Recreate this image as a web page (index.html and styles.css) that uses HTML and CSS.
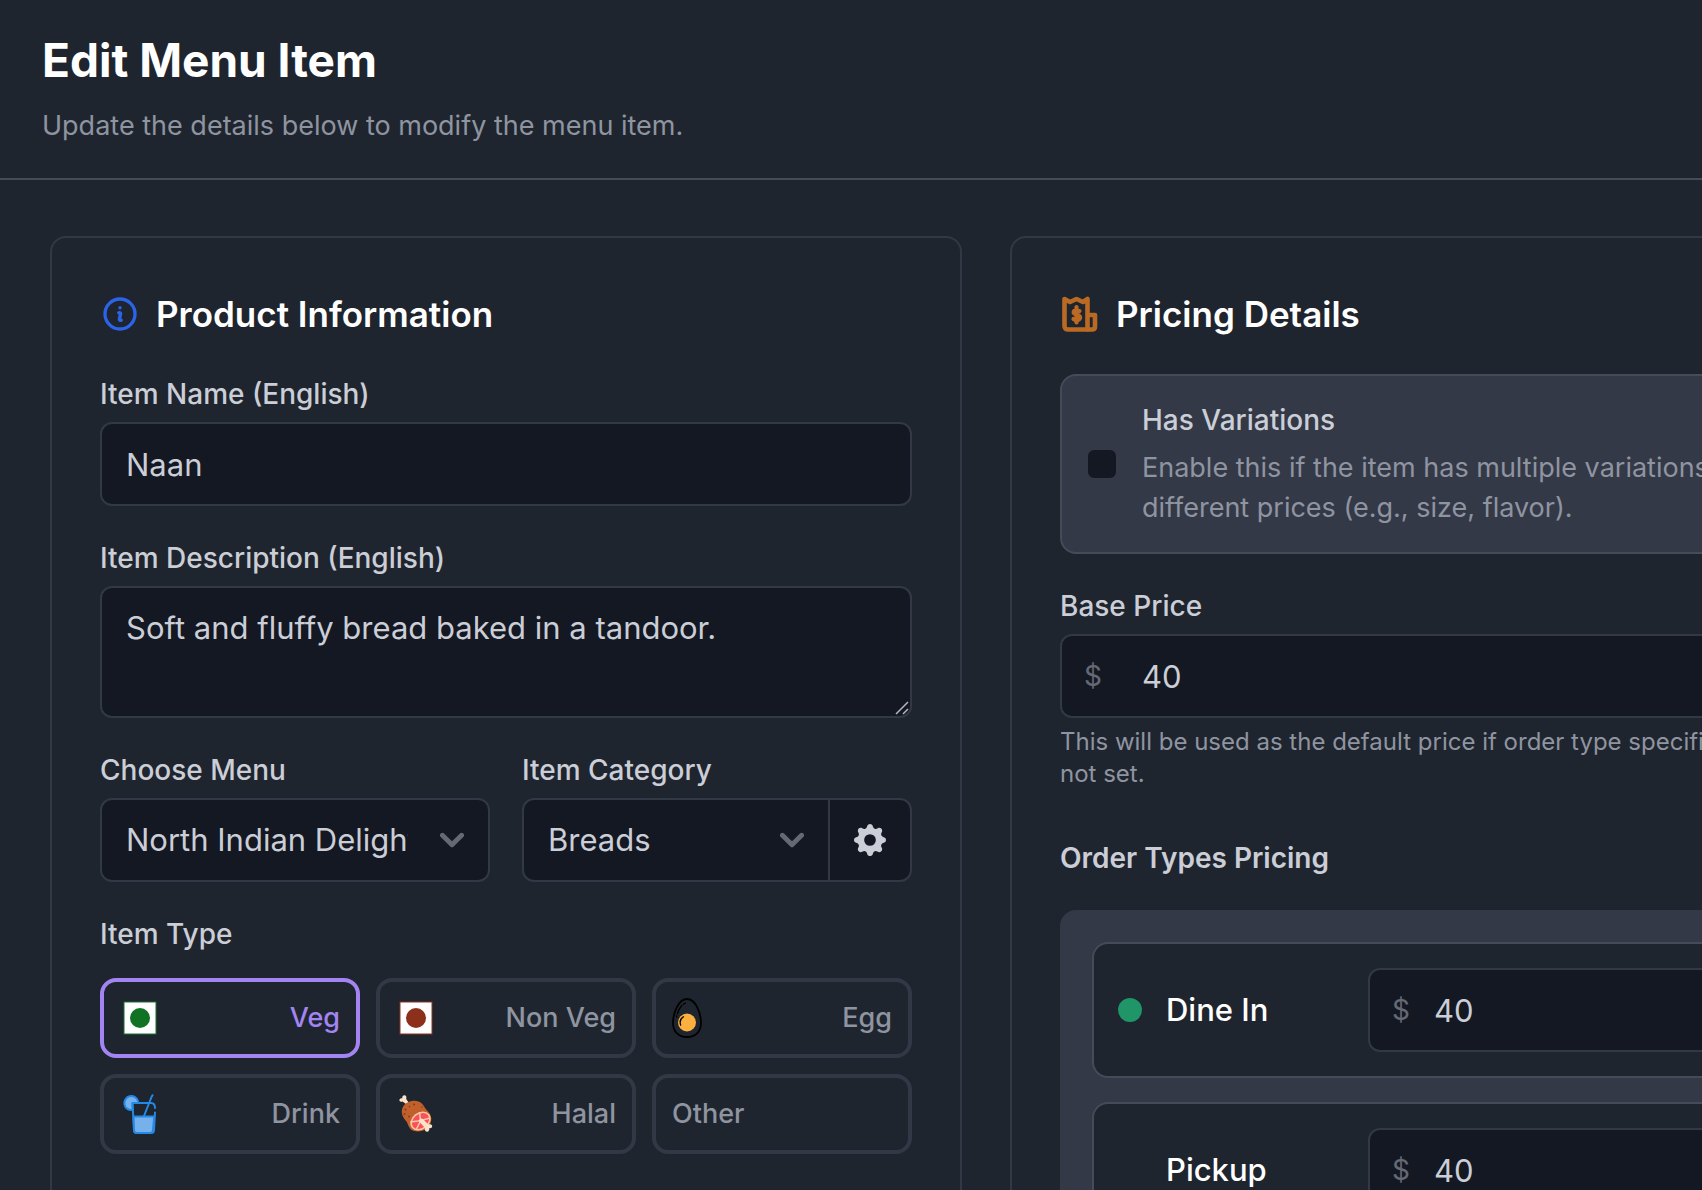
FILE: index.html
```html
<!DOCTYPE html>
<html lang="en">
<head>
<meta charset="utf-8">
<title>Edit Menu Item</title>
<link rel="stylesheet" href="styles.css">
</head>
<body>
<div class="page">
  <header class="page-header">
    <h1 class="page-title">Edit Menu Item</h1>
    <p class="page-subtitle">Update the details below to modify the menu item.</p>
  </header>

  <form class="cards">
    <section class="card">
      <h2 class="card-title">
        <svg class="title-icon info-icon" viewBox="0 0 24 24" fill="none" stroke="currentColor" stroke-width="2" stroke-linecap="round" stroke-linejoin="round" aria-hidden="true"><path d="m11.25 11.25.041-.02a.75.75 0 0 1 1.063.852l-.708 2.836a.75.75 0 0 0 1.063.853l.041-.021M21 12a9 9 0 1 1-18 0 9 9 0 0 1 18 0Zm-9-3.75h.008v.008H12V8.25Z" /></svg>
        Product Information
      </h2>

      <div class="field">
        <label class="label" for="item-name">Item Name (English)</label>
        <input class="control" id="item-name" type="text" value="Naan">
      </div>

      <div class="field">
        <label class="label" for="item-description">Item Description (English)</label>
        <textarea class="control textarea" id="item-description" rows="2">Soft and fluffy bread baked in a tandoor.</textarea>
      </div>

      <div class="field-pair">
        <div class="field">
          <label class="label" for="menu">Choose Menu</label>
          <select class="control select" id="menu"><option>North Indian Delights</option></select>
        </div>
        <div class="field">
          <label class="label" for="category">Item Category</label>
          <div class="select-group">
            <select class="control select" id="category"><option>Breads</option></select>
            <button class="gear-button" type="button" aria-label="Manage categories">
              <svg class="gear-icon" viewBox="0 0 16 16" fill="currentColor" aria-hidden="true"><path d="M9.405 1.05c-.413-1.4-2.397-1.4-2.81 0l-.1.34a1.464 1.464 0 0 1-2.105.872l-.31-.17c-1.283-.698-2.686.705-1.987 1.987l.169.311c.446.82.023 1.841-.872 2.105l-.34.1c-1.4.413-1.4 2.397 0 2.81l.34.1a1.464 1.464 0 0 1 .872 2.105l-.17.31c-.698 1.283.705 2.686 1.987 1.987l.311-.169a1.464 1.464 0 0 1 2.105.872l.1.34c.413 1.4 2.397 1.4 2.81 0l.1-.34a1.464 1.464 0 0 1 2.105-.872l.31.17c1.283.698 2.686-.705 1.987-1.987l-.169-.311a1.464 1.464 0 0 1 .872-2.105l.34-.1c1.4-.413 1.4-2.397 0-2.81l-.34-.1a1.464 1.464 0 0 1-.872-2.105l.17-.31c.698-1.283-.705-2.686-1.987-1.987l-.311.169a1.464 1.464 0 0 1-2.105-.872l-.1-.34zM8 10.93a2.929 2.929 0 1 1 0-5.86 2.929 2.929 0 0 1 0 5.858z"/></svg>
            </button>
          </div>
        </div>
      </div>

      <div class="type-field">
        <span class="label" id="type-label">Item Type</span>
        <div class="types" role="group" aria-labelledby="type-label">
          <button class="type type-active" type="button" aria-pressed="true">
            <svg class="type-icon" viewBox="0 0 40 40" aria-hidden="true"><rect x="4" y="4" width="32" height="32" fill="#fff" stroke="#12752a"/><circle cx="20" cy="20" r="10" fill="#107324"/></svg>
            Veg
          </button>
          <button class="type" type="button">
            <svg class="type-icon" viewBox="0 0 40 40" aria-hidden="true"><rect x="4" y="4" width="32" height="32" fill="#fff" stroke="#8f301c"/><circle cx="20" cy="20" r="10" fill="#8c2f1b"/></svg>
            Non Veg
          </button>
          <button class="type" type="button">
            <svg class="type-icon" viewBox="0 0 40 40" fill="none" stroke="#000" stroke-linecap="round" aria-hidden="true"><path d="M15 1C7 1 1 14 1 25c0 9 6 14 14 14s14-5 14-14C29 14 23 1 15 1Z" stroke-width="1.8"/><path d="M5.500 15.500C6.500 12 8 9.500 9.800 7.500M11.500 6.200 13.500 5M4.800 17.800 4.600 19" stroke-width="1.4"/><circle cx="15" cy="24.500" r="9" fill="#fbb040" stroke="none"/><path d="M11.500 18.800c-3 1.700-4 5-2.800 8.400" stroke-width="1.300"/></svg>
            Egg
          </button>
          <button class="type" type="button">
            <svg class="type-icon" viewBox="0 0 40 40" fill="none" stroke="#2389e8" stroke-width="2" stroke-linecap="round" stroke-linejoin="round" aria-hidden="true"><path d="M18 7A7 7 0 1 0 12.500 16V9h6" fill="#76b1ec"/><path d="M12.500 9H31q4 0 4 5M12.500 9l1.500 27q0 3 3 3h14q3 0 3-3l1-17.500M24 22 31.500 3 32.500 1.200"/><path d="M13.500 22.500h20.700L33 36q0 3-3 3H17q-3 0-3-3Z" fill="#76b1ec"/></svg>
            Drink
          </button>
          <button class="type" type="button">
            <svg class="type-icon" viewBox="0 0 40 40" aria-hidden="true"><path d="M10 10 6.500 7.500C4.500 8.500 2.500 6.800 3.800 5c.8-1 1.700-.8 2.400-.6C6 2.500 7 .8 8.800 1.200c1.500.4 1.900 2 1.400 3.800L13 9Z" fill="#fde2cb"/><path d="M6.500 14C9 8 17 5.500 22.500 7.500c5 2 5.500 5.500 8.500 9 4.500 4 5.500 9 3 14-3 6-10 8-16 6.500-5-1.500-5.500-6-7.500-9.500-3.500-4-6-8-4-13.500Z" fill="#c1602b"/><g fill="#873b1c"><circle cx="18" cy="10.500" r="1"/><circle cx="9.500" cy="15.500" r="1"/><circle cx="13.500" cy="12.500" r=".8"/><circle cx="8.500" cy="20" r="1"/><circle cx="13" cy="22.500" r="1"/><circle cx="26" cy="13" r=".8"/></g><ellipse cx="24.500" cy="27" rx="11" ry="8.500" transform="rotate(-38 24.500 27)" fill="#fdc9a4"/><ellipse cx="24.500" cy="27" rx="9.500" ry="7" transform="rotate(-38 24.500 27)" fill="#fb4f5a"/><path d="M23.500 18 24.500 27M14.500 28 25 26.500 34 24M24.500 27 20 36" stroke="#fdc9a4" stroke-width="1.600"/><path d="M23.500 25.500c1.500-1.500 3-1 4.500.7l4.500 4.300c2-1 4.500.5 3.500 2.500-.6 1.200-1.700 1.300-2.600 1 .2 2-.8 4-2.600 3.700-1.900-.3-2.300-2-1.800-3.700L24 28.500c-1-1-1.300-2-.5-3Z" fill="#fde2cb"/></svg>
            Halal
          </button>
          <button class="type" type="button">Other</button>
        </div>
      </div>
    </section>

    <section class="card">
      <h2 class="card-title">
        <svg class="title-icon receipt-icon" viewBox="0 0 40 40" fill="none" stroke="currentColor" stroke-width="4.600" stroke-linejoin="round" stroke-linecap="round" aria-hidden="true"><path d="M4.500 5 10 8 16.500 5 23 8 27.500 5V35.500H8q-3.500 0-3.500-3.500Z"/><path d="M27.500 35.500H32q3 0 3-3V21h-6" /><path d="M19.500 17q-3-2.500-5-.5c-2 2.500 0 3.500 2.200 4 3 .8 4.500 3 2.300 5q-2.500 1.500-5.500-.5M16.500 13v15.500" stroke-width="4.200"/></svg>
        Pricing Details
      </h2>

      <div class="notice">
        <input class="checkbox" id="has-variations" type="checkbox" aria-describedby="variations-help">
        <div class="notice-text">
          <label class="label" for="has-variations">Has Variations</label>
          <p class="notice-help" id="variations-help">Enable this if the item has multiple variations with different prices (e.g., size, flavor).</p>
        </div>
      </div>

      <div class="field">
        <label class="label" for="base-price">Base Price</label>
        <div class="price price-wide">
          <span class="currency">$</span>
          <input class="control" id="base-price" type="text" inputmode="decimal" value="40">
        </div>
        <p class="hint">This will be used as the default price if order type specific prices are not set.</p>
      </div>

      <div class="order-types">
        <h3 class="section-title">Order Types Pricing</h3>
        <div class="order-panel">
          <div class="order-row">
            <span class="dot dot-on"></span>
            <label class="order-name" for="dine-in">Dine In</label>
            <div class="price">
              <span class="currency">$</span>
              <input class="control" id="dine-in" type="text" inputmode="decimal" value="40">
            </div>
          </div>
          <div class="order-row">
            <span class="dot"></span>
            <label class="order-name" for="pickup">Pickup</label>
            <div class="price">
              <span class="currency">$</span>
              <input class="control" id="pickup" type="text" inputmode="decimal" value="40">
            </div>
          </div>
        </div>
      </div>
    </section>
  </form>
</div>
</body>
</html>
```
FILE: styles.css
```css
:root {
  --bg: #1f252e;
  --field: #141822;
  --line: #323846;
  --line-strong: #454b59;
  --panel: #343947;
  --text: #cbced6;
  --muted: #8f94a1;
  --faint: #646974;
  --accent: #a284f2;
}

*,
*::before,
*::after {
  box-sizing: border-box;
}

body,
h1,
h2,
h3,
p {
  margin: 0;
}

body {
  background: var(--bg);
  color: var(--text);
  font-family: Inter, "Liberation Sans", sans-serif;
  font-size: 31px;
  line-height: 48px;
}

button,
input,
select,
textarea {
  margin: 0;
  font: inherit;
  color: inherit;
}

.page {
  height: 100vh;
  overflow: hidden;
}

.page-header {
  padding: 28px 42px 32px;
  border-bottom: 2px solid var(--line-strong);
}

.page-title {
  color: #fff;
  font-size: 46px;
  font-weight: 700;
  line-height: 64px;
}

.page-subtitle {
  margin-top: 14px;
  color: var(--muted);
  font-size: 27px;
  line-height: 40px;
}

/* Each card keeps a readable minimum width, so the second may run off the window. */
.cards {
  display: grid;
  grid-template-columns: repeat(2, minmax(912px, 1fr));
  gap: 48px;
  padding: 56px 50px;
}

.card {
  display: flex;
  flex-direction: column;
  gap: 32px;
  padding: 48px;
  border: 2px solid var(--line);
  border-radius: 16px;
}

.card-title {
  display: flex;
  align-items: center;
  gap: 16px;
  color: #fff;
  font-size: 35px;
  font-weight: 600;
  line-height: 56px;
}

.title-icon {
  width: 40px;
  height: 40px;
}

.info-icon {
  color: #2b63ea;
}

.receipt-icon {
  color: #bb6a23;
}

.field {
  display: flex;
  flex-direction: column;
  gap: 8px;
  min-width: 0;
}

.label {
  font-size: 28px;
  font-weight: 500;
  line-height: 40px;
}

.control {
  display: block;
  width: 100%;
  min-width: 0;
  height: 84px;
  padding: 16px 24px;
  border: 2px solid var(--line);
  border-radius: 12px;
  outline: 0;
  background-color: var(--field);
}

.textarea {
  height: 132px;
  resize: none;
  background-image: url("data:image/svg+xml,%3Csvg xmlns='http://www.w3.org/2000/svg' viewBox='0 0 16 16' fill='none' stroke='%23b4b7bd' stroke-width='1.500'%3E%3Cpath d='M2 14 14 2M9 14l5-5'/%3E%3C/svg%3E");
  background-repeat: no-repeat;
  background-position: right bottom;
  background-size: 16px 16px;
}

.field-pair {
  display: grid;
  grid-template-columns: 1fr 1fr;
  gap: 32px;
}

.select {
  appearance: none;
  padding-right: 80px;
  background-image: url("data:image/svg+xml,%3Csvg xmlns='http://www.w3.org/2000/svg' viewBox='0 0 10 6' fill='none' stroke='%23646974' stroke-width='2' stroke-linecap='round' stroke-linejoin='round'%3E%3Cpath d='m1 1 4 4 4-4'/%3E%3C/svg%3E");
  background-repeat: no-repeat;
  background-position: right 24px center;
  background-size: 24px 24px;
}

.select-group {
  display: flex;
}

.select-group .select {
  flex: 1;
  border-radius: 12px 0 0 12px;
}

.gear-button {
  display: flex;
  align-items: center;
  justify-content: center;
  width: 82px;
  padding: 0;
  border: 2px solid var(--line);
  border-left: 0;
  border-radius: 0 12px 12px 0;
  background: var(--field);
}

.gear-icon {
  width: 32px;
  height: 32px;
}

.type-field {
  display: flex;
  flex-direction: column;
  gap: 24px;
}

.types {
  display: grid;
  grid-template-columns: repeat(3, 1fr);
  gap: 16px;
}

.type {
  display: flex;
  align-items: center;
  justify-content: space-between;
  height: 80px;
  padding: 16px;
  border: 4px solid var(--line);
  border-radius: 16px;
  background: transparent;
  color: var(--muted);
  font-size: 27px;
  font-weight: 500;
  line-height: 40px;
}

.type-active {
  border-color: var(--accent);
  color: var(--accent);
}

.type-icon {
  width: 40px;
  height: 40px;
}

.notice {
  display: flex;
  align-items: center;
  gap: 24px;
  padding: 24px;
  border: 2px solid var(--line-strong);
  border-radius: 16px;
  background: var(--panel);
}

.checkbox {
  appearance: none;
  flex: none;
  width: 32px;
  height: 32px;
  border: 2px solid var(--panel);
  border-radius: 8px;
  background: var(--field);
}

.notice-text {
  display: flex;
  flex-direction: column;
  gap: 8px;
}

.notice-help {
  color: var(--muted);
  font-size: 27px;
  line-height: 40px;
}

.price {
  position: relative;
  flex: 1;
}

.price .control {
  padding-left: 64px;
}

.price-wide .control {
  padding-left: 80px;
}

/* The currency sign lies over the left end of its text box. */
.currency {
  position: absolute;
  top: 18px;
  left: 24px;
  color: var(--faint);
  font-size: 28px;
}

.hint {
  color: var(--muted);
  font-size: 24px;
  line-height: 32px;
}

.order-types {
  display: flex;
  flex-direction: column;
  gap: 32px;
  margin-top: 16px;
}

.section-title {
  font-size: 28px;
  font-weight: 600;
  line-height: 40px;
}

.order-panel {
  display: flex;
  flex-direction: column;
  gap: 24px;
  padding: 32px;
  border-radius: 16px;
  background: var(--panel);
}

.order-row {
  display: flex;
  align-items: center;
  gap: 24px;
  padding: 24px;
  border: 2px solid var(--line-strong);
  border-radius: 16px;
  background: var(--bg);
}

.dot {
  flex: none;
  width: 24px;
  height: 24px;
  border-radius: 50%;
}

.dot-on {
  background: #1f9568;
}

.order-name {
  flex: none;
  width: 178px;
  color: #fff;
  font-weight: 500;
}
```
